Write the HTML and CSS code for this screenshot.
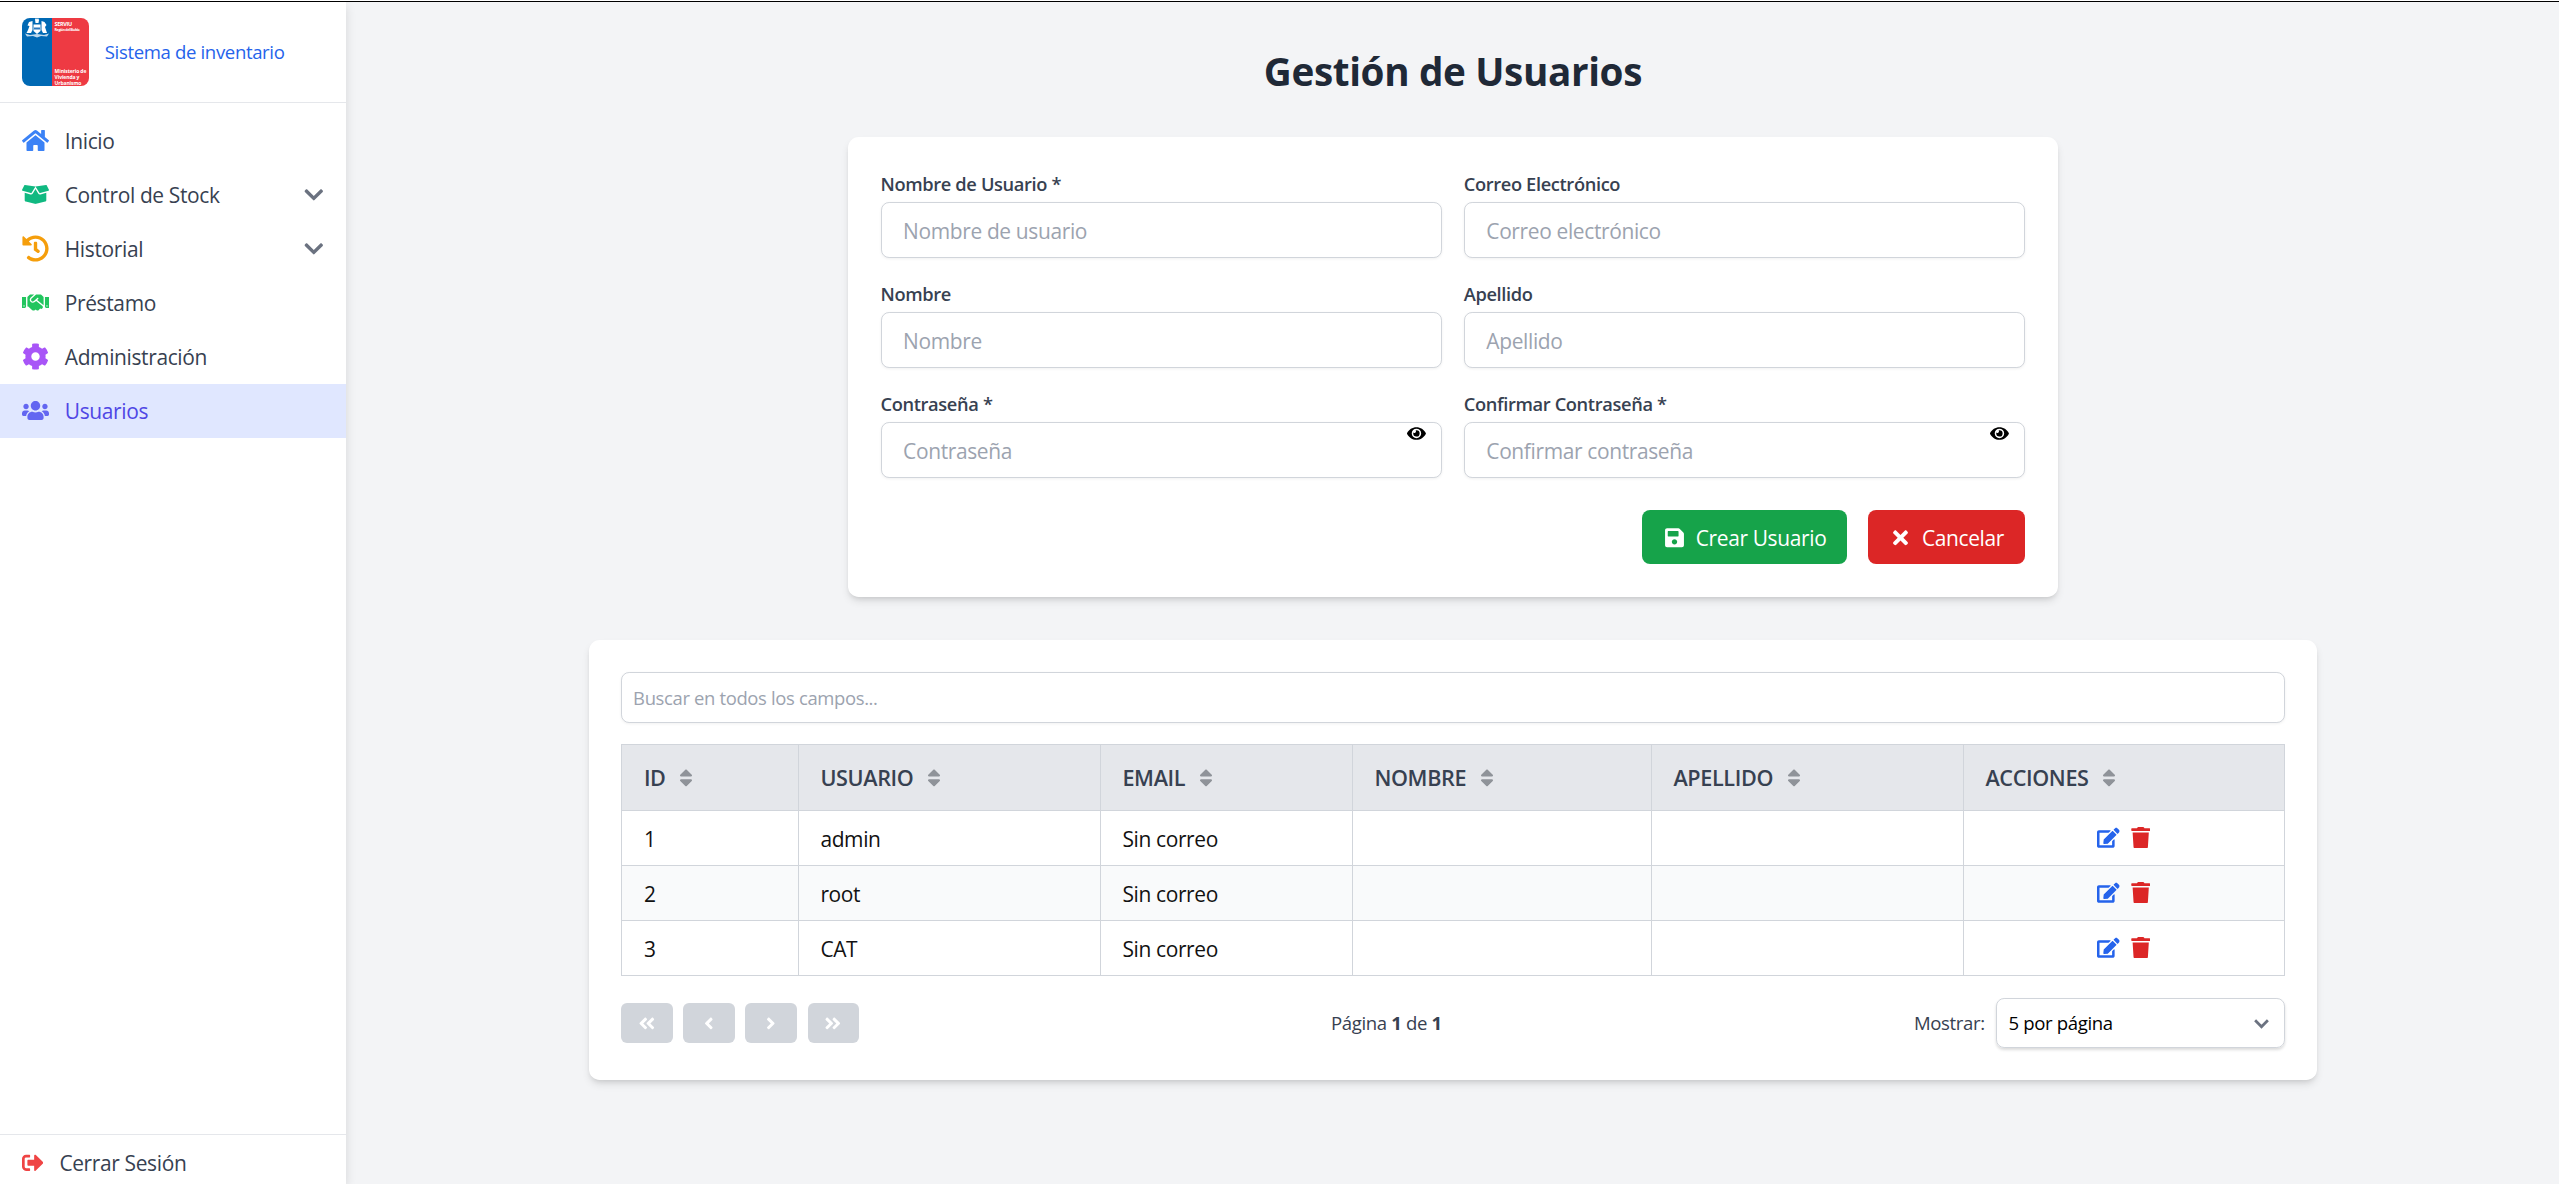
FILE: index.html
```html
<!DOCTYPE html>
<html lang="es">
<head>
<meta charset="utf-8">
<title>Gestión de Usuarios</title>
<link rel="stylesheet" href="styles.css">
</head>
<body>
<svg class="sprite" aria-hidden="true">
  <symbol id="home" viewBox="0 0 576 512"><path d="M280.37 148.26L96 300.11V464a16 16 0 0 0 16 16l112.06-.29a16 16 0 0 0 15.92-16V368a16 16 0 0 1 16-16h64a16 16 0 0 1 16 16v95.64a16 16 0 0 0 16 16.05L464 480a16 16 0 0 0 16-16V300L295.67 148.26a12.19 12.19 0 0 0-15.3 0zM571.6 251.47L488 182.56V44.05a12 12 0 0 0-12-12h-56a12 12 0 0 0-12 12v72.61L318.47 43a48 48 0 0 0-61 0L4.34 251.47a12 12 0 0 0-1.6 16.9l25.5 31A12 12 0 0 0 45.15 301l235.22-193.74a12.19 12.19 0 0 1 15.3 0L530.9 301a12 12 0 0 0 16.9-1.6l25.5-31a12 12 0 0 0-1.7-16.93z"/></symbol>
  <symbol id="box" viewBox="0 0 640 512"><path d="M425.7 256c-16.9 0-32.8-9-41.4-23.4L320 126l-64.2 106.6c-8.7 14.5-24.6 23.5-41.5 23.5-4.5 0-9-.6-13.3-1.9L64 215v178c0 14.7 10 27.5 24.2 31l216.2 54.1c10.2 2.5 20.9 2.5 31 0L551.8 424c14.2-3.6 24.2-16.4 24.2-31V215l-137 39.1c-4.3 1.3-8.8 1.9-13.3 1.9zm212.6-112.2L586.8 41c-3.1-6.2-9.8-9.8-16.7-8.9L320 64l91.7 152.1c3.8 6.3 11.4 9.3 18.5 7.3l197.9-56.5c9.9-2.9 14.7-13.9 10.2-23.1zM53.2 41L1.7 143.8c-4.6 9.2.3 20.2 10.1 23l197.9 56.5c7.1 2 14.7-1 18.5-7.3L320 64 69.8 32.1c-6.9-.8-13.5 2.7-16.6 8.9z"/></symbol>
  <symbol id="history" viewBox="0 0 512 512"><path d="M504 255.531c.253 136.64-111.18 248.372-247.82 248.468-59.015.042-113.223-20.53-155.822-54.911-11.077-8.94-11.905-25.541-1.839-35.607l11.267-11.267c8.609-8.609 22.353-9.551 31.891-1.984C173.062 425.135 212.781 440 256 440c101.705 0 184-82.311 184-184 0-101.705-82.311-184-184-184-48.814 0-93.149 18.969-126.068 49.932l50.754 50.754c10.08 10.08 2.941 27.314-11.313 27.314H24c-8.837 0-16-7.163-16-16V38.627c0-14.254 17.234-21.393 27.314-11.314l49.372 49.372C129.209 34.136 189.552 8 256 8c136.81 0 247.747 110.78 248 247.531zm-180.912 78.784l9.823-12.63c8.138-10.463 6.253-25.542-4.21-33.679L288 256.349V152c0-13.255-10.745-24-24-24h-16c-13.255 0-24 10.745-24 24v135.651l65.409 50.874c10.463 8.137 25.541 6.253 33.679-4.21z"/></symbol>
  <symbol id="handshake" viewBox="0 0 640 512"><path d="M434.7 64h-85.9c-8 0-15.7 3-21.6 8.4l-98.3 90c-.1.1-.2.3-.3.4-16.6 15.6-16.3 40.5-2.1 56 12.7 13.9 39.4 17.6 56.1 2.7.1-.1.3-.1.4-.2l79.9-73.2c6.5-5.9 16.7-5.5 22.6 1 6 6.5 5.5 16.6-1 22.6l-26.1 23.9L504 313.8c2.9 2.4 5.5 5 7.9 7.7V128l-54.6-54.6c-5.9-6-14.1-9.4-22.6-9.4zM544 128.2v223.9c0 17.7 14.3 32 32 32h64V128.2h-96zm48 223.9c-8.8 0-16-7.2-16-16s7.2-16 16-16 16 7.2 16 16-7.2 16-16 16zM0 384h64c17.7 0 32-14.3 32-32V128.2H0V384zm48-63.9c8.8 0 16 7.2 16 16s-7.2 16-16 16-16-7.2-16-16c0-8.9 7.2-16 16-16zm435.9 18.6L334.6 217.5l-30 27.5c-29.7 27.1-75.2 24.5-101.7-4.4-26.9-29.4-24.8-74.9 4.4-101.7L289.1 64h-83.8c-8.5 0-16.6 3.4-22.6 9.4L128 128v223.9h18.3l90.5 81.9c27.4 22.3 67.7 18.1 90-9.3l.2-.2 17.9 15.5c15.9 13 39.4 10.5 52.3-5.4l31.4-38.6 5.4 4.4c13.7 11.1 33.9 9.1 45-4.7l9.5-11.7c11.2-13.8 9.1-33.9-4.6-45.1z"/></symbol>
  <symbol id="cog" viewBox="0 0 512 512"><path d="M487.4 315.7l-42.6-24.6c4.3-23.2 4.3-47 0-70.2l42.6-24.6c4.9-2.8 7.1-8.6 5.5-14-11.1-35.6-30-67.8-54.7-94.6-3.8-4.1-10-5.1-14.8-2.3L380.8 110c-17.9-15.4-38.5-27.3-60.8-35.1V25.8c0-5.6-3.9-10.5-9.4-11.7-36.7-8.2-74.3-7.8-109.2 0-5.5 1.2-9.4 6.1-9.4 11.7V75c-22.2 7.9-42.8 19.8-60.8 35.1L88.7 85.5c-4.9-2.8-11-1.9-14.8 2.3-24.7 26.7-43.6 58.9-54.7 94.6-1.7 5.4.6 11.2 5.5 14L67.3 221c-4.3 23.2-4.3 47 0 70.2l-42.6 24.6c-4.9 2.8-7.1 8.6-5.5 14 11.1 35.6 30 67.8 54.7 94.6 3.8 4.1 10 5.1 14.8 2.3l42.6-24.6c17.9 15.4 38.5 27.3 60.8 35.1v49.2c0 5.6 3.9 10.5 9.4 11.7 36.7 8.2 74.3 7.8 109.2 0 5.5-1.2 9.4-6.1 9.4-11.7v-49.2c22.2-7.9 42.8-19.8 60.8-35.1l42.6 24.6c4.9 2.8 11 1.9 14.8-2.3 24.7-26.7 43.6-58.9 54.7-94.6 1.5-5.5-.7-11.3-5.6-14.1zM256 336c-44.1 0-80-35.9-80-80s35.9-80 80-80 80 35.9 80 80-35.9 80-80 80z"/></symbol>
  <symbol id="users" viewBox="0 0 640 512"><path d="M96 224c35.3 0 64-28.7 64-64s-28.7-64-64-64-64 28.7-64 64 28.7 64 64 64zm448 0c35.3 0 64-28.7 64-64s-28.7-64-64-64-64 28.7-64 64 28.7 64 64 64zm32 32h-64c-17.6 0-33.5 7.1-45.1 18.6 40.3 22.1 68.9 62 75.1 109.4h66c17.7 0 32-14.3 32-32v-32c0-35.3-28.7-64-64-64zm-256 0c61.9 0 112-50.1 112-112S381.9 32 320 32 208 82.1 208 144s50.1 112 112 112zm76.8 32h-8.3c-20.8 10-43.9 16-68.5 16s-47.6-6-68.5-16h-8.3C179.6 288 128 339.6 128 403.2V432c0 26.5 21.5 48 48 48h288c26.5 0 48-21.5 48-48v-28.8c0-63.6-51.6-115.2-115.2-115.2zm-223.7-13.4C161.5 263.1 145.6 256 128 256H64c-35.3 0-64 28.7-64 64v32c0 17.7 14.3 32 32 32h65.9c6.3-47.4 34.9-87.3 75.2-109.4z"/></symbol>
  <symbol id="signout" viewBox="0 0 512 512"><path d="M497 273L329 441c-15 15-41 4.5-41-17v-96H152c-13.3 0-24-10.7-24-24v-96c0-13.3 10.7-24 24-24h136V88c0-21.4 25.9-32 41-17l168 168c9.3 9.4 9.3 24.6 0 34zM192 436v-40c0-6.6-5.4-12-12-12H96c-17.7 0-32-14.3-32-32V160c0-17.7 14.3-32 32-32h84c6.6 0 12-5.4 12-12V76c0-6.6-5.4-12-12-12H96c-53 0-96 43-96 96v192c0 53 43 96 96 96h84c6.6 0 12-5.4 12-12z"/></symbol>
  <symbol id="chevron" viewBox="0 0 448 512"><path d="M207.029 381.476L12.686 187.132c-9.373-9.373-9.373-24.569 0-33.941l22.667-22.667c9.357-9.357 24.522-9.375 33.901-.04L224 284.505l154.745-154.021c9.379-9.335 24.544-9.317 33.901.04l22.667 22.667c9.373 9.373 9.373 24.569 0 33.941L240.971 381.476c-9.373 9.372-24.569 9.372-33.942 0z"/></symbol>
  <symbol id="save" viewBox="0 0 448 512"><path d="M433.941 129.941l-83.882-83.882A48 48 0 0 0 316.118 32H48C21.49 32 0 53.49 0 80v352c0 26.51 21.49 48 48 48h352c26.51 0 48-21.49 48-48V163.882a48 48 0 0 0-14.059-33.941zM224 416c-35.346 0-64-28.654-64-64 0-35.346 28.654-64 64-64s64 28.654 64 64c0 35.346-28.654 64-64 64zm96-304.52V212c0 6.627-5.373 12-12 12H76c-6.627 0-12-5.373-12-12V108c0-6.627 5.373-12 12-12h228.52c3.183 0 6.235 1.264 8.485 3.515l3.48 3.48A11.996 11.996 0 0 1 320 111.48z"/></symbol>
  <symbol id="times" viewBox="0 0 352 512"><path d="M242.72 256l100.07-100.07c12.28-12.28 12.28-32.19 0-44.48l-22.24-22.24c-12.28-12.28-32.19-12.28-44.48 0L176 189.28 75.93 89.21c-12.28-12.28-32.19-12.28-44.48 0L9.21 111.45c-12.28 12.28-12.28 32.19 0 44.48L109.28 256 9.21 356.07c-12.28 12.28-12.28 32.19 0 44.48l22.24 22.24c12.28 12.28 32.2 12.28 44.48 0L176 322.72l100.07 100.07c12.28 12.28 32.2 12.28 44.48 0l22.24-22.24c12.28-12.28 12.28-32.19 0-44.48L242.72 256z"/></symbol>
  <symbol id="eye" viewBox="0 0 576 512"><path d="M572.52 241.4C518.29 135.59 410.93 64 288 64S57.68 135.64 3.48 241.41a32.35 32.35 0 0 0 0 29.19C57.71 376.41 165.07 448 288 448s230.32-71.64 284.52-177.41a32.35 32.35 0 0 0 0-29.19zM288 400a144 144 0 1 1 144-144 143.93 143.93 0 0 1-144 144zm0-240a95.31 95.31 0 0 0-25.31 3.79 47.85 47.85 0 0 1-66.9 66.9A95.78 95.78 0 1 0 288 160z"/></symbol>
  <symbol id="edit" viewBox="0 0 576 512"><path d="M402.6 83.2l90.2 90.2c3.8 3.8 3.8 10 0 13.8L274.4 405.6l-92.8 10.3c-12.4 1.4-22.9-9.1-21.5-21.5l10.3-92.8L388.8 83.2c3.8-3.8 10-3.8 13.8 0zm162-22.9l-48.8-48.8c-15.2-15.2-39.9-15.2-55.2 0l-35.4 35.4c-3.8 3.8-3.8 10 0 13.8l90.2 90.2c3.8 3.8 10 3.8 13.8 0l35.4-35.4c15.2-15.3 15.2-40 0-55.2zM384 346.2V448H64V128h229.8c3.2 0 6.2-1.3 8.5-3.5l40-40c7.6-7.6 2.2-20.5-8.5-20.5H48C21.5 64 0 85.5 0 112v352c0 26.5 21.5 48 48 48h352c26.5 0 48-21.5 48-48V306.2c0-10.7-12.9-16-20.5-8.5l-40 40c-2.2 2.3-3.5 5.3-3.5 8.5z"/></symbol>
  <symbol id="trash" viewBox="0 0 448 512"><path d="M432 32H312l-9.4-18.7A24 24 0 0 0 281.1 0H166.8a23.72 23.72 0 0 0-21.4 13.3L136 32H16A16 16 0 0 0 0 48v32a16 16 0 0 0 16 16h416a16 16 0 0 0 16-16V48a16 16 0 0 0-16-16zM53.2 467a48 48 0 0 0 47.9 45h245.8a48 48 0 0 0 47.9-45L416 128H32z"/></symbol>
  <symbol id="sort" viewBox="0 0 320 512"><path d="M41 288h238c21.4 0 32.1 25.9 17 41L177 448c-9.4 9.4-24.6 9.4-33.9 0L24 329c-15.1-15.1-4.4-41 17-41zm255-105L177 64c-9.4-9.4-24.6-9.4-33.9 0L24 183c-15.1 15.1-4.4 41 17 41h238c21.4 0 32.1-25.9 17-41z"/></symbol>
  <symbol id="first" viewBox="0 0 448 512"><path d="M223.7 239l136-136c9.4-9.4 24.6-9.4 33.9 0l22.6 22.6c9.4 9.4 9.4 24.6 0 33.9L319.9 256l96.4 96.4c9.4 9.4 9.4 24.6 0 33.9L393.7 409c-9.4 9.4-24.6 9.4-33.9 0l-136-136c-9.5-9.4-9.5-24.6-.1-34zm-192 34l136 136c9.4 9.4 24.6 9.4 33.9 0l22.6-22.6c9.4-9.4 9.4-24.6 0-33.9L127.9 256l96.4-96.4c9.4-9.4 9.4-24.6 0-33.9L201.7 103c-9.4-9.4-24.6-9.4-33.9 0l-136 136c-9.5 9.4-9.5 24.6-.1 34z"/></symbol>
  <symbol id="prev" viewBox="0 0 256 512"><path d="M31.7 239l136-136c9.4-9.4 24.6-9.4 33.9 0l22.6 22.6c9.4 9.4 9.4 24.6 0 33.9L127.9 256l96.4 96.4c9.4 9.4 9.4 24.6 0 33.9L201.7 409c-9.4 9.4-24.6 9.4-33.9 0l-136-136c-9.5-9.4-9.5-24.6-.1-34z"/></symbol>
</svg>
<div class="app">
  <aside class="sidebar">
    <div class="brand">
      <div class="logo">
        <div class="logo-blue">
          <svg class="crest" viewBox="0 0 26 20" fill="#d5e4f3"><path d="M11 1.500L12 0L13 1.500L14 0L15 2L14.500 5H11.500z"/><path d="M9.500 6.500h7v6.500l-3.500 3l-3.500-3z"/><path d="M8.500 3L5 4L3.500 7.500L5.500 8L4 12L2.500 15H7L8.500 12z"/><path d="M17.500 3L20.500 4L22.500 7L21 9L23 15H19L17.500 12z"/><path d="M1 15.500L6 17L13 16L20 17L25 15.500L23 18.500L17 18L13 19.500L9 18L3 18.500z" opacity=".75"/><path d="M10 9.500h6v2h-6z" fill="#2b78bd"/></svg>
        </div>
        <div class="logo-red">
          <div><div class="logo-name">SERVIU</div><div class="logo-region">Región del Biobío</div></div>
          <div class="logo-ministry">Ministerio de<br>Vivienda y<br>Urbanismo</div>
        </div>
      </div>
      <span class="brand-name">Sistema de inventario</span>
    </div>
    <nav class="nav">
      <a class="item"><svg class="ico blue"><use href="#home"/></svg><span>Inicio</span></a>
      <a class="item"><svg class="ico emerald"><use href="#box"/></svg><span>Control de Stock</span><svg class="caret"><use href="#chevron"/></svg></a>
      <a class="item"><svg class="ico amber"><use href="#history"/></svg><span>Historial</span><svg class="caret"><use href="#chevron"/></svg></a>
      <a class="item"><svg class="ico green"><use href="#handshake"/></svg><span>Préstamo</span></a>
      <a class="item"><svg class="ico purple"><use href="#cog"/></svg><span>Administración</span></a>
      <a class="item active"><svg class="ico indigo"><use href="#users"/></svg><span>Usuarios</span></a>
    </nav>
    <div class="logout"><svg class="ico-sm"><use href="#signout"/></svg><span>Cerrar Sesión</span></div>
  </aside>
  <main class="main">
    <h1 class="title">Gestión de Usuarios</h1>
    <form class="card form">
      <div class="grid">
        <div class="field"><label>Nombre de Usuario *</label><input type="text" placeholder="Nombre de usuario"></div>
        <div class="field"><label>Correo Electrónico</label><input type="text" placeholder="Correo electrónico"></div>
        <div class="field"><label>Nombre</label><input type="text" placeholder="Nombre"></div>
        <div class="field"><label>Apellido</label><input type="text" placeholder="Apellido"></div>
        <div class="field"><label>Contraseña *</label><input type="password" placeholder="Contraseña"><svg class="eye"><use href="#eye"/></svg></div>
        <div class="field"><label>Confirmar Contraseña *</label><input type="password" placeholder="Confirmar contraseña"><svg class="eye"><use href="#eye"/></svg></div>
      </div>
      <div class="actions">
        <button type="button" class="btn create"><svg class="save"><use href="#save"/></svg><span>Crear Usuario</span></button>
        <button type="button" class="btn cancel"><svg class="times"><use href="#times"/></svg><span>Cancelar</span></button>
      </div>
    </form>
    <section class="card list">
      <input class="search" type="text" placeholder="Buscar en todos los campos...">
      <table class="table">
        <colgroup><col class="c1"><col class="c2"><col class="c3"><col class="c4"><col class="c5"><col class="c6"></colgroup>
        <thead><tr>
          <th><div class="th"><span>ID</span><svg class="sort"><use href="#sort"/></svg></div></th>
          <th><div class="th"><span>USUARIO</span><svg class="sort"><use href="#sort"/></svg></div></th>
          <th><div class="th"><span>EMAIL</span><svg class="sort"><use href="#sort"/></svg></div></th>
          <th><div class="th"><span>NOMBRE</span><svg class="sort"><use href="#sort"/></svg></div></th>
          <th><div class="th"><span>APELLIDO</span><svg class="sort"><use href="#sort"/></svg></div></th>
          <th><div class="th"><span>ACCIONES</span><svg class="sort"><use href="#sort"/></svg></div></th>
        </tr></thead>
        <tbody>
          <tr><td>1</td><td>admin</td><td>Sin correo</td><td></td><td></td><td><div class="tools"><svg class="edit"><use href="#edit"/></svg><svg class="trash"><use href="#trash"/></svg></div></td></tr>
          <tr><td>2</td><td>root</td><td>Sin correo</td><td></td><td></td><td><div class="tools"><svg class="edit"><use href="#edit"/></svg><svg class="trash"><use href="#trash"/></svg></div></td></tr>
          <tr><td>3</td><td>CAT</td><td>Sin correo</td><td></td><td></td><td><div class="tools"><svg class="edit"><use href="#edit"/></svg><svg class="trash"><use href="#trash"/></svg></div></td></tr>
        </tbody>
      </table>
      <div class="pager">
        <div class="pages">
          <button type="button" class="pg"><svg><use href="#first"/></svg></button>
          <button type="button" class="pg"><svg><use href="#prev"/></svg></button>
          <button type="button" class="pg flip"><svg><use href="#prev"/></svg></button>
          <button type="button" class="pg flip"><svg><use href="#first"/></svg></button>
        </div>
        <div class="count">Página <b>1</b> de <b>1</b></div>
        <div class="size"><span>Mostrar:</span><div class="select"><span>5 por página</span><svg viewBox="0 0 16 10"><path d="M2 2l6 6 6-6"/></svg></div></div>
      </div>
    </section>
  </main>
</div>
</body>
</html>
```
FILE: styles.css
```css
*, *::before, *::after { box-sizing: border-box; }
html { font-size: 21.6px; }
body {
  margin: 0;
  height: 100vh;
  overflow: hidden;
  padding-top: 2px;
  background: linear-gradient(#fff 1px, #000 1px, #000 2px, #f3f4f6 2px);
  color: #111;
  font: 0.97rem/1.5rem "Open Sans", "Noto Sans", sans-serif;
  letter-spacing: -0.017em;
}
svg { display: block; fill: currentColor; flex: none; }
.sprite { position: absolute; width: 0; height: 0; }
input, button { font: inherit; letter-spacing: inherit; }
.app { display: flex; height: 100%; overflow: hidden; }

.sidebar {
  position: relative;
  width: 346px;
  flex: none;
  display: flex;
  flex-direction: column;
  background: #fff;
  box-shadow: 0 4px 10px rgba(0, 0, 0, .12);
  color: #374151;
}
.brand {
  display: flex;
  align-items: center;
  gap: 0.75rem;
  padding: 0.75rem 1rem;
  border-bottom: 1px solid #e5e7eb;
}
.logo {
  width: 67px;
  height: 67.5px;
  display: flex;
  border-radius: 8px;
  overflow: hidden;
  color: #fff;
  font-weight: 700;
}
.logo-blue { width: 30px; background: #0069b4; }
.crest { width: 26px; height: 20px; margin: 0 auto; }
.logo-red {
  flex: 1;
  display: flex;
  flex-direction: column;
  justify-content: space-between;
  padding: 3px 0 0 3px;
  background: #ee3a43;
  white-space: nowrap;
  line-height: 6px;
}
.logo-name { font-size: 5.5px; }
.logo-region { font-size: 3.6px; }
.logo-ministry { font-size: 5px; letter-spacing: -0.1px; }
.brand-name { color: #2563eb; font-size: 0.86rem; }
.nav { flex: 1; padding-top: 0.5rem; }
.item {
  height: 2.5rem;
  display: flex;
  align-items: center;
  gap: 0.75rem;
  padding: 0 1rem;
}
.item span { padding-top: 1px; }
.item.active { background: #e0e7ff; color: #4f46e5; }
.ico { width: 1.25rem; height: 1.25rem; }
.blue { color: #3b82f6; }
.emerald { color: #10b981; }
.amber { color: #f59e0b; }
.green { color: #22c55e; }
.purple { color: #a855f7; }
.indigo { color: #6366f1; }
.caret { width: 1rem; height: 1rem; margin-left: auto; color: #6b7280; }
.logout {
  height: 50px;
  display: flex;
  align-items: center;
  gap: 0.75rem;
  padding: 7px 1rem 0;
  border-top: 1px solid #e5e7eb;
}
.ico-sm { width: 1rem; height: 1rem; color: #ef4444; }

.main { flex: 1; padding: 45px 2rem 0 44px; }
.title {
  margin: 0 0 41.6px;
  text-align: center;
  color: #1f2937;
  font-size: 1.79rem;
  line-height: 2.25rem;
  font-weight: 700;
}
.card {
  margin: 0 auto;
  padding: 1.5rem;
  background: #fff;
  border-radius: 0.5rem;
  box-shadow: 0 5px 8px -1px rgba(0, 0, 0, .11), 0 3px 5px -2px rgba(0, 0, 0, .1);
}
.form { width: 56rem; }
.grid { display: grid; grid-template-columns: 1fr 1fr; gap: 1rem; }
.field { position: relative; display: flex; flex-direction: column; gap: 0.25rem; }
.field label {
  height: 27px;
  color: #374151;
  font-size: 0.845rem;
  line-height: 1.25rem;
  font-weight: 600;
}
.field input {
  height: 56px;
  padding: 2px 1rem 0;
}
.field input, .search {
  width: 100%;
  border: 1px solid #d1d5db;
  border-radius: 0.375rem;
  background: #fff;
  box-shadow: 0 1px 3px rgba(0, 0, 0, .06);
}
input::placeholder { color: #9ca3af; opacity: 1; }
.eye {
  position: absolute;
  right: 0.75rem;
  top: 34.5px;
  width: 0.875rem;
  height: 0.875rem;
  color: #000;
}
.actions { display: flex; justify-content: flex-end; gap: 1rem; margin-top: 1.5rem; }
.btn {
  height: 2.5rem;
  display: flex;
  align-items: center;
  border: 0;
  border-radius: 0.375rem;
  padding: 0 1rem;
  color: #fff;
  white-space: nowrap;
}
.btn span { padding-top: 2px; }
.create { width: 205px; gap: 12px; padding-left: 23px; background: #16a34a; }
.cancel { width: 157px; gap: 11px; background: #dc2626; }
.save { width: 19px; height: 21.6px; }
.times { width: 21px; height: 21.6px; }

.list { width: 80rem; margin-top: 2rem; height: 440px; }
.search { display: block; height: 50.6px; padding: 0 0.5rem; font-size: 0.855rem; }
.table {
  width: 100%;
  margin-top: 21px;
  table-layout: fixed;
  border-collapse: collapse;
}
.c1 { width: 176.5px; }
.c2 { width: 302px; }
.c3 { width: 252px; }
.c4 { width: 299px; }
.c5 { width: 312px; }
.table th, .table td { border: 1px solid #d1d5db; padding: 0 1rem; text-align: left; }
.table th { height: 66px; padding-top: 1px; background: #e5e7eb; color: #374151; font-weight: 600; }
.table td { height: 55px; padding-top: 2px; }
.table tbody tr:nth-child(even) { background: #f9fafb; }
.th { display: flex; align-items: center; gap: 0.63rem; font-size: 1rem; }
.sort { width: 0.65rem; height: 1rem; color: #8f9399; }
.tools { display: flex; justify-content: center; gap: 0.5rem; margin-top: -3px; }
.edit { width: 1.05rem; height: 1rem; color: #2563eb; }
.trash { width: 0.9rem; height: 1rem; color: #dc2626; }
.pager {
  display: flex;
  align-items: center;
  justify-content: space-between;
  margin-top: 22.6px;
  color: #374151;
  font-size: 0.86rem;
}
.pages { display: flex; gap: 0.5rem; }
.pg {
  width: 51.3px;
  height: 40px;
  display: flex;
  align-items: center;
  justify-content: center;
  padding: 0;
  border: 0;
  border-radius: 6px;
  background: #d1d5db;
  color: #fff;
}
.pg svg { width: 1rem; height: 0.875rem; }
.flip svg { transform: scaleX(-1); }
.size { display: flex; align-items: center; gap: 0.5rem; }
.select {
  width: 289px;
  height: 50px;
  display: flex;
  align-items: center;
  justify-content: space-between;
  padding: 0 14px 0 12px;
  border: 1px solid #d1d5db;
  border-radius: 0.375rem;
  box-shadow: 0 2px 3px rgba(0, 0, 0, .14);
  color: #000;
}
.select svg { width: 17px; height: 11px; fill: none; stroke: #6b7280; stroke-width: 2.6; }
```
